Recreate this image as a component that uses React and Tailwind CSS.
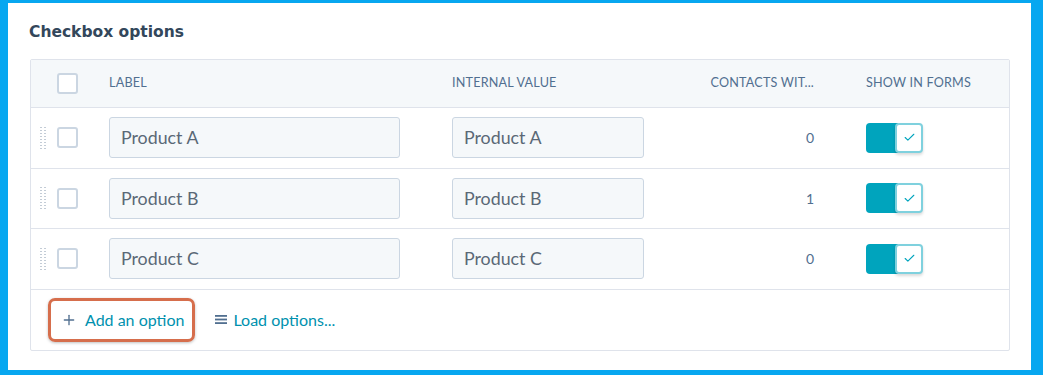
import { Plus, Check } from "lucide-react";

const rows = [
  { label: "Product A", value: "Product A", count: 0 },
  { label: "Product B", value: "Product B", count: 1 },
  { label: "Product C", value: "Product C", count: 0 },
];

function Box() {
  return <div className="w-[21px] h-[21px] rounded-[3px] border-2 border-[#cbd6e2] bg-white" />;
}

function Grip() {
  return (
    <div className="grid grid-cols-2 gap-x-[1px] gap-y-[2px] w-[7px]">
      {Array.from({ length: 16 }).map((_, i) => (
        <span key={i} className="w-[2px] h-[1px] bg-[#c3ccd6]" />
      ))}
    </div>
  );
}

function Toggle() {
  return (
    <div className="flex items-center w-[57px] h-[30px]">
      <div className="w-[32px] h-[30px] bg-[#00a4bd] rounded-l-[4px]" />
      <div className="-ml-[3px] w-[28px] h-[30px] bg-white border-2 border-[#7fd1de] rounded-[4px] flex items-center justify-center shadow-[0_2px_3px_rgba(0,0,0,0.15)]">
        <Check className="w-[13px] h-[13px] text-[#00a4bd]" strokeWidth={2} />
      </div>
    </div>
  );
}

export default function App() {
  return (
    <div className="w-[1043px] h-[375px] bg-[#07a7f0] pl-[8px] pr-[12px] pt-[3px] pb-[5px] font-['Lato',sans-serif]">
      <div className="bg-white h-full pl-[21px] pr-[21px] pt-[20px]">
        <h2 className="text-[15.5px] font-bold text-[#33475b] leading-[18px] font-['DejaVu_Sans',sans-serif]">Checkbox options</h2>

        <div className="mt-[18px] ml-[1px] border border-[#dfe3eb] rounded-[2px]">
          {/* header */}
          <div className="flex items-center h-[48px] bg-[#f5f8fa] border-b border-[#dfe3eb] text-[12.6px] text-[#516f90] tracking-[0.2px]">
            <div className="w-[26px]" />
            <div className="w-[52px]"><Box /></div>
            <div className="w-[343px]">LABEL</div>
            <div className="w-[250px]">INTERNAL VALUE</div>
            <div className="w-[112px] text-right whitespace-nowrap">CONTACTS WIT...</div>
            <div className="pl-[52px] whitespace-nowrap">SHOW IN FORMS</div>
          </div>

          {rows.map((r) => (
            <div key={r.label} className="flex items-center h-[60.5px] border-b border-[#dfe3eb]">
              <div className="w-[26px] pl-[9px]"><Grip /></div>
              <div className="w-[52px]"><Box /></div>
              <div className="w-[343px]">
                <div className="w-[291px] h-[41px] bg-[#f5f8fa] border border-[#cbd6e2] rounded-[3px] flex items-center px-[11px] text-[17.8px] text-[#5a6876]">
                  {r.label}
                </div>
              </div>
              <div className="w-[250px]">
                <div className="w-[192px] h-[41px] bg-[#f5f8fa] border border-[#cbd6e2] rounded-[3px] flex items-center px-[11px] text-[17.8px] text-[#5a6876]">
                  {r.value}
                </div>
              </div>
              <div className="w-[112px] text-right text-[14px] text-[#516f90]">{r.count}</div>
              <div className="pl-[52px]"><Toggle /></div>
            </div>
          ))}

          {/* footer */}
          <div className="flex items-center h-[60px] pl-[17px]">
            <button className="flex items-center gap-[8px] h-[44px] pl-[10px] pr-[8px] border-[3px] border-[#d66e4c] rounded-[7px] shadow-[0_1px_3px_rgba(0,0,0,0.25)] text-[16px] text-[#0091ae]">
              <Plus className="w-[16px] h-[16px] text-[#516f90]" strokeWidth={2} />
              Add an option
            </button>
            <div className="flex items-center ml-[20px] text-[16px] text-[#0091ae]">
              <svg width="13" height="11" viewBox="0 0 13 11" className="mr-[5px]">
                <rect x="0" y="1" width="12" height="1.8" fill="#516f90" />
                <rect x="0" y="4.6" width="12" height="1.8" fill="#516f90" />
                <rect x="0" y="8.2" width="12" height="1.8" fill="#516f90" />
              </svg>
              Load options...
            </div>
          </div>
        </div>
      </div>
    </div>
  );
}
